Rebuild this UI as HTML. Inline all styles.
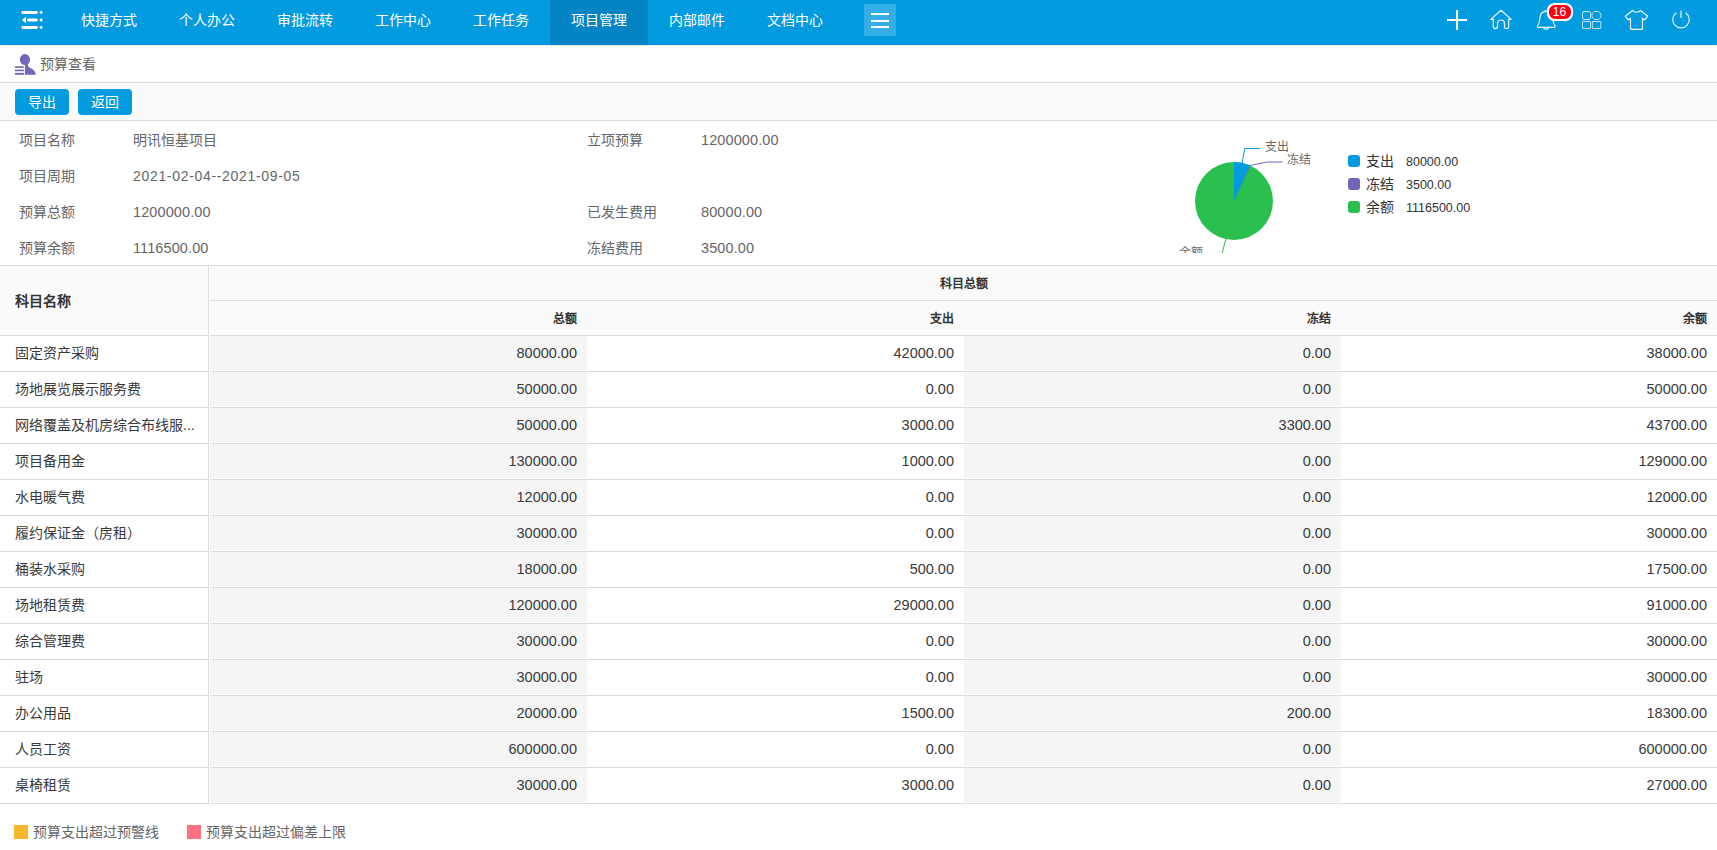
<!DOCTYPE html>
<html lang="zh-CN">
<head>
<meta charset="utf-8">
<title>预算查看</title>
<style>
*{box-sizing:border-box;margin:0;padding:0}
html,body{width:1717px;height:850px;overflow:hidden;background:#fff}
body{font-family:"Liberation Sans",sans-serif;font-size:14px;color:#333;position:relative}
.abs{position:absolute}
/* nav */
#nav{position:absolute;left:0;top:0;width:1717px;height:45px;background:#039be0;box-shadow:0 1px 3px rgba(0,0,0,.09);z-index:5}
#nav:after{content:"";position:absolute;left:0;top:44px;width:100%;height:1px;background:rgba(0,40,90,.07)}
#nav .item{position:absolute;top:0;height:45px;width:98px;line-height:40px;text-align:center;color:#fff;font-size:14px}
#nav .item.on{background:#0284c5}
#hamb{position:absolute;left:864px;top:4px;width:32px;height:32px;background:#36ade6}
#hamb i{position:absolute;left:7px;width:18px;height:2px;background:#fff}
/* title */
#title{position:absolute;left:0;top:45px;width:1717px;height:38px;border-bottom:1px solid #ddd;background:#fff}
#title span{position:absolute;left:40px;top:0;line-height:39px;color:#666;font-size:14px}
#tool{position:absolute;left:0;top:83px;width:1717px;height:38px;background:#fafafa;border-bottom:1px solid #ddd}
.btn{position:absolute;top:6px;width:54px;height:26px;border-radius:4px;background:#039be0;color:#fff;font-size:14px;line-height:26px;text-align:center}
/* info */
.lab{position:absolute;color:#666;font-size:14px;line-height:20px;white-space:nowrap}
.val{position:absolute;color:#666;font-size:14px;line-height:20px;white-space:nowrap}
.ls{font-size:14.500px;letter-spacing:.1px}
/* table */
#tbl{position:absolute;left:0;top:265px;width:1717px;height:539px;border-top:1px solid #ddd}
.hl{position:absolute;background:#ddd}
.cell{position:absolute;height:35px;line-height:35px;font-size:14px;color:#3a3a3a;white-space:nowrap}
.num{text-align:right;padding-right:10px}
.cell.num{font-size:14.500px}
.shade{background:linear-gradient(#f5f5f5,#f5f5f5) no-repeat 0 0/100% 34px}
.hd{position:absolute;background:#fafafa;font-weight:bold;color:#333}
.lg{position:absolute;font-size:14px;color:#666;line-height:20px;white-space:nowrap}
</style>
</head>
<body>
<div id="nav">
  <div class="item" style="left:60px">快捷方式</div>
  <div class="item" style="left:158px">个人办公</div>
  <div class="item" style="left:256px">审批流转</div>
  <div class="item" style="left:354px">工作中心</div>
  <div class="item" style="left:452px">工作任务</div>
  <div class="item on" style="left:550px">项目管理</div>
  <div class="item" style="left:648px">内部邮件</div>
  <div class="item" style="left:746px">文档中心</div>
  <div id="hamb"><i style="top:9px"></i><i style="top:16px"></i><i style="top:22px"></i></div>
  <!--NAVICONS-->
<svg class="abs" style="left:0;top:0" width="70" height="45" viewBox="0 0 70 45" fill="none" stroke="#fff" stroke-width="2.800" stroke-linecap="round">
<path d="M22.700 12.500H36.500M41 12.500H41.200M28.500 20H36.500M41 20H41.200M22.700 27.500H36.500M41 27.500H41.200"/>
<path d="M21.800 20L26 16.800V23.200Z" fill="#fff" stroke="none"/>
</svg>
<svg class="abs" style="left:1430px;top:0" width="287" height="45" viewBox="1430 0 287 45" fill="none" stroke="#fff" stroke-linecap="round" stroke-linejoin="round">
<path d="M1447 20H1467M1457 10V30" stroke-width="2" stroke-linecap="butt"/>
<path d="M1490.800 19.400L1501 10.300L1511.200 19.400H1508.700V26.500a2.100 2.100 0 0 1 -4.200 0V23.500a3.500 3.500 0 0 0 -7 0V26.500a2.100 2.100 0 0 1 -4.200 0V19.400Z" stroke-width="1.200" opacity=".92"/>
<path d="M1538.300 27.400a.9 .9 0 0 1 -.8 -1.400c2.200 -2.600 2.200 -4.600 2.400 -8c.3 -4.300 3 -6.600 6.400 -6.600s6.100 2.300 6.400 6.600c.2 3.400 .2 5.400 2.400 8a.9 .9 0 0 1 -.8 1.400Z" stroke-width="1.100" opacity=".92"/>
<path d="M1543.300 27.600a3 2.400 0 0 0 5.600 0M1545.300 11.300V10.300" stroke-width="1.100" opacity=".92"/>
<g stroke-width="1" opacity=".75">
<rect x="1582.500" y="11.500" width="8" height="8" rx="1.500"/>
<path d="M1594.500 11.500h4l2.500 2.500v3l-2.500 2.500h-4l-2.500 -2.500v-3Z"/>
<rect x="1582.500" y="21.500" width="8" height="7" rx=".5"/>
<rect x="1592.300" y="21.500" width="8.500" height="7" rx=".5"/>
</g>
<path d="M1632.500 10.500c1.500 2.300 6.500 2.300 8 0l7.200 5.800l-3 3.500l-2.200 -1.500V28.500a.8 .8 0 0 1 -.8 .8h-10.400a.8 .8 0 0 1 -.8 -.8V18.300l-2.200 1.500l-3 -3.500Z" stroke-width="1.200" opacity=".95"/>
<path d="M1676.100 12.900a8.300 8.300 0 1 0 9.800 0M1681 10.800V17.500" stroke-width="1.200" opacity=".9"/>
</svg>
<div class="abs" style="left:1546.500px;top:2.500px;width:26px;height:18px;border-radius:8px;background:#ff0016;border:2px solid #fff;color:#fff;font-size:12px;line-height:15px;text-align:center;box-shadow:0 0 1px rgba(255,255,255,.6)">16</div>
<!--/NAVICONS-->
</div>
<div id="title"><!--TITLEICON-->
<svg class="abs" style="left:14px;top:4px" width="24" height="28" viewBox="14 49 24 28">
<g fill="#7565b9">
<ellipse cx="24.950" cy="59.550" rx="5.100" ry="5.500"/>
<path d="M24.900 63.500H27.900C27.600 66.300 28.300 67.100 30.500 68.100C33.500 69.500 35.400 71.700 35.900 74.800H24.900Z"/>
<rect x="15" y="66.300" width="8.900" height="1.600"/>
<rect x="15" y="69.600" width="8.900" height="1.500"/>
<rect x="15" y="73" width="8.900" height="1.800"/>
<rect x="15" y="71.100" width="8.900" height="1.900" opacity=".15"/>
</g></svg>
<!--/TITLEICON--><span>预算查看</span></div>
<div id="tool"><div class="btn" style="left:15px">导出</div><div class="btn" style="left:78px">返回</div></div>
<!--INFO-->
<div class="lab" style="left:19px;top:130px">项目名称</div>
<div class="val" style="left:133px;top:130px">明讯恒基项目</div>
<div class="lab" style="left:19px;top:166px">项目周期</div>
<div class="val" style="left:133px;top:166px;letter-spacing:.68px">2021-02-04--2021-09-05</div>
<div class="lab" style="left:19px;top:202px">预算总额</div>
<div class="val ls" style="left:133px;top:202px">1200000.00</div>
<div class="lab" style="left:19px;top:238px">预算余额</div>
<div class="val ls" style="left:133px;top:238px">1116500.00</div>
<div class="lab" style="left:587px;top:130px">立项预算</div>
<div class="val ls" style="left:701px;top:130px">1200000.00</div>
<div class="lab" style="left:587px;top:202px">已发生费用</div>
<div class="val ls" style="left:701px;top:202px">80000.00</div>
<div class="lab" style="left:587px;top:238px">冻结费用</div>
<div class="val ls" style="left:701px;top:238px">3500.00</div>
<!--/INFO-->
<!--PIE-->
<svg class="abs" style="left:1150px;top:121px" width="400" height="132" viewBox="1150 121 400 132">
<circle cx="1234" cy="201" r="39" fill="#2ac04d"/>
<path d="M1234 201L1234.00 162.00A39 39 0 0 1 1249.86 165.37Z" fill="#039be0"/>
<path d="M1234 201L1249.86 165.37A39 39 0 0 1 1250.51 165.67Z" fill="#7565b9"/>
<polyline points="1242.1,163 1244.8,148.5 1260,148.5" fill="none" stroke="#039be0" stroke-width="1"/>
<polyline points="1250.2,165.5 1267.2,162 1282.5,162" fill="none" stroke="#7565b9" stroke-width="1"/>
<polyline points="1225.8,239.1 1222.2,253" fill="none" stroke="#2ac04d" stroke-width="1"/>
<text x="1265" y="150.700" font-size="12" fill="#666">支出</text>
<text x="1286.800" y="164.300" font-size="12" fill="#666">冻结</text>
<text x="1178.500" y="257" font-size="12" fill="#666">余额</text>
<rect x="1348" y="155" width="12" height="12" rx="3" fill="#039be0"/>
<rect x="1348" y="178" width="12" height="12" rx="3" fill="#7565b9"/>
<rect x="1348" y="201" width="12" height="12" rx="3" fill="#2ac04d"/>
<text x="1365.500" y="166" font-size="14" fill="#333">支出</text>
<text x="1365.500" y="189" font-size="14" fill="#333">冻结</text>
<text x="1365.500" y="212" font-size="14" fill="#333">余额</text>
<text x="1406" y="165.500" font-size="12.500" fill="#333">80000.00</text>
<text x="1406" y="188.500" font-size="12.500" fill="#333">3500.00</text>
<text x="1406" y="211.500" font-size="12.500" fill="#333">1116500.00</text>
</svg>
<!--/PIE-->
<!--TABLE-->
<div id="tbl">
<div class="hd" style="left:0;top:0;width:208px;height:69px;line-height:71px;padding-left:15px;font-size:14px">科目名称</div>
<div class="hd" style="left:210px;top:0;width:1507px;height:34px;line-height:36px;text-align:center;font-size:12px">科目总额</div>
<div class="hd" style="left:210px;top:35px;width:1507px;height:34px"></div>
<div class="hd num" style="left:210px;top:35px;width:377px;height:34px;line-height:36px;font-size:12px">总额</div>
<div class="hd num" style="left:587px;top:35px;width:377px;height:34px;line-height:36px;font-size:12px">支出</div>
<div class="hd num" style="left:964px;top:35px;width:377px;height:34px;line-height:36px;font-size:12px">冻结</div>
<div class="hd num" style="left:1341px;top:35px;width:376px;height:34px;line-height:36px;font-size:12px">余额</div>
<div class="hl" style="left:210px;top:34px;width:1507px;height:1px"></div>
<div class="hl" style="left:0;top:69px;width:208px;height:1px"></div>
<div class="hl" style="left:210px;top:69px;width:1507px;height:1px"></div>
<div class="cell" style="left:0;top:70px;width:208px;padding-left:15px">固定资产采购</div>
<div class="cell num shade" style="left:210px;top:70px;width:377px">80000.00</div>
<div class="cell num" style="left:587px;top:70px;width:377px">42000.00</div>
<div class="cell num shade" style="left:964px;top:70px;width:377px">0.00</div>
<div class="cell num" style="left:1341px;top:70px;width:376px">38000.00</div>
<div class="hl" style="left:0;top:105px;width:208px;height:1px"></div>
<div class="hl" style="left:210px;top:105px;width:1507px;height:1px"></div>
<div class="cell" style="left:0;top:106px;width:208px;padding-left:15px">场地展览展示服务费</div>
<div class="cell num shade" style="left:210px;top:106px;width:377px">50000.00</div>
<div class="cell num" style="left:587px;top:106px;width:377px">0.00</div>
<div class="cell num shade" style="left:964px;top:106px;width:377px">0.00</div>
<div class="cell num" style="left:1341px;top:106px;width:376px">50000.00</div>
<div class="hl" style="left:0;top:141px;width:208px;height:1px"></div>
<div class="hl" style="left:210px;top:141px;width:1507px;height:1px"></div>
<div class="cell" style="left:0;top:142px;width:208px;padding-left:15px">网络覆盖及机房综合布线服...</div>
<div class="cell num shade" style="left:210px;top:142px;width:377px">50000.00</div>
<div class="cell num" style="left:587px;top:142px;width:377px">3000.00</div>
<div class="cell num shade" style="left:964px;top:142px;width:377px">3300.00</div>
<div class="cell num" style="left:1341px;top:142px;width:376px">43700.00</div>
<div class="hl" style="left:0;top:177px;width:208px;height:1px"></div>
<div class="hl" style="left:210px;top:177px;width:1507px;height:1px"></div>
<div class="cell" style="left:0;top:178px;width:208px;padding-left:15px">项目备用金</div>
<div class="cell num shade" style="left:210px;top:178px;width:377px">130000.00</div>
<div class="cell num" style="left:587px;top:178px;width:377px">1000.00</div>
<div class="cell num shade" style="left:964px;top:178px;width:377px">0.00</div>
<div class="cell num" style="left:1341px;top:178px;width:376px">129000.00</div>
<div class="hl" style="left:0;top:213px;width:208px;height:1px"></div>
<div class="hl" style="left:210px;top:213px;width:1507px;height:1px"></div>
<div class="cell" style="left:0;top:214px;width:208px;padding-left:15px">水电暖气费</div>
<div class="cell num shade" style="left:210px;top:214px;width:377px">12000.00</div>
<div class="cell num" style="left:587px;top:214px;width:377px">0.00</div>
<div class="cell num shade" style="left:964px;top:214px;width:377px">0.00</div>
<div class="cell num" style="left:1341px;top:214px;width:376px">12000.00</div>
<div class="hl" style="left:0;top:249px;width:208px;height:1px"></div>
<div class="hl" style="left:210px;top:249px;width:1507px;height:1px"></div>
<div class="cell" style="left:0;top:250px;width:208px;padding-left:15px">履约保证金（房租）</div>
<div class="cell num shade" style="left:210px;top:250px;width:377px">30000.00</div>
<div class="cell num" style="left:587px;top:250px;width:377px">0.00</div>
<div class="cell num shade" style="left:964px;top:250px;width:377px">0.00</div>
<div class="cell num" style="left:1341px;top:250px;width:376px">30000.00</div>
<div class="hl" style="left:0;top:285px;width:208px;height:1px"></div>
<div class="hl" style="left:210px;top:285px;width:1507px;height:1px"></div>
<div class="cell" style="left:0;top:286px;width:208px;padding-left:15px">桶装水采购</div>
<div class="cell num shade" style="left:210px;top:286px;width:377px">18000.00</div>
<div class="cell num" style="left:587px;top:286px;width:377px">500.00</div>
<div class="cell num shade" style="left:964px;top:286px;width:377px">0.00</div>
<div class="cell num" style="left:1341px;top:286px;width:376px">17500.00</div>
<div class="hl" style="left:0;top:321px;width:208px;height:1px"></div>
<div class="hl" style="left:210px;top:321px;width:1507px;height:1px"></div>
<div class="cell" style="left:0;top:322px;width:208px;padding-left:15px">场地租赁费</div>
<div class="cell num shade" style="left:210px;top:322px;width:377px">120000.00</div>
<div class="cell num" style="left:587px;top:322px;width:377px">29000.00</div>
<div class="cell num shade" style="left:964px;top:322px;width:377px">0.00</div>
<div class="cell num" style="left:1341px;top:322px;width:376px">91000.00</div>
<div class="hl" style="left:0;top:357px;width:208px;height:1px"></div>
<div class="hl" style="left:210px;top:357px;width:1507px;height:1px"></div>
<div class="cell" style="left:0;top:358px;width:208px;padding-left:15px">综合管理费</div>
<div class="cell num shade" style="left:210px;top:358px;width:377px">30000.00</div>
<div class="cell num" style="left:587px;top:358px;width:377px">0.00</div>
<div class="cell num shade" style="left:964px;top:358px;width:377px">0.00</div>
<div class="cell num" style="left:1341px;top:358px;width:376px">30000.00</div>
<div class="hl" style="left:0;top:393px;width:208px;height:1px"></div>
<div class="hl" style="left:210px;top:393px;width:1507px;height:1px"></div>
<div class="cell" style="left:0;top:394px;width:208px;padding-left:15px">驻场</div>
<div class="cell num shade" style="left:210px;top:394px;width:377px">30000.00</div>
<div class="cell num" style="left:587px;top:394px;width:377px">0.00</div>
<div class="cell num shade" style="left:964px;top:394px;width:377px">0.00</div>
<div class="cell num" style="left:1341px;top:394px;width:376px">30000.00</div>
<div class="hl" style="left:0;top:429px;width:208px;height:1px"></div>
<div class="hl" style="left:210px;top:429px;width:1507px;height:1px"></div>
<div class="cell" style="left:0;top:430px;width:208px;padding-left:15px">办公用品</div>
<div class="cell num shade" style="left:210px;top:430px;width:377px">20000.00</div>
<div class="cell num" style="left:587px;top:430px;width:377px">1500.00</div>
<div class="cell num shade" style="left:964px;top:430px;width:377px">200.00</div>
<div class="cell num" style="left:1341px;top:430px;width:376px">18300.00</div>
<div class="hl" style="left:0;top:465px;width:208px;height:1px"></div>
<div class="hl" style="left:210px;top:465px;width:1507px;height:1px"></div>
<div class="cell" style="left:0;top:466px;width:208px;padding-left:15px">人员工资</div>
<div class="cell num shade" style="left:210px;top:466px;width:377px">600000.00</div>
<div class="cell num" style="left:587px;top:466px;width:377px">0.00</div>
<div class="cell num shade" style="left:964px;top:466px;width:377px">0.00</div>
<div class="cell num" style="left:1341px;top:466px;width:376px">600000.00</div>
<div class="hl" style="left:0;top:501px;width:208px;height:1px"></div>
<div class="hl" style="left:210px;top:501px;width:1507px;height:1px"></div>
<div class="cell" style="left:0;top:502px;width:208px;padding-left:15px">桌椅租赁</div>
<div class="cell num shade" style="left:210px;top:502px;width:377px">30000.00</div>
<div class="cell num" style="left:587px;top:502px;width:377px">3000.00</div>
<div class="cell num shade" style="left:964px;top:502px;width:377px">0.00</div>
<div class="cell num" style="left:1341px;top:502px;width:376px">27000.00</div>
<div class="hl" style="left:0;top:537px;width:208px;height:1px"></div>
<div class="hl" style="left:210px;top:537px;width:1507px;height:1px"></div>
<div class="hl" style="left:208px;top:0;width:1px;height:538px"></div>
</div>
<!--/TABLE-->
<!--LEGEND-->
<div class="abs" style="left:14px;top:825px;width:14px;height:14px;background:#f5b731"></div>
<div class="lg" style="left:32.600px;top:822px">预算支出超过预警线</div>
<div class="abs" style="left:187px;top:825px;width:14px;height:14px;background:#fe7080"></div>
<div class="lg" style="left:205.600px;top:822px">预算支出超过偏差上限</div>
<!--/LEGEND-->
</body>
</html>
